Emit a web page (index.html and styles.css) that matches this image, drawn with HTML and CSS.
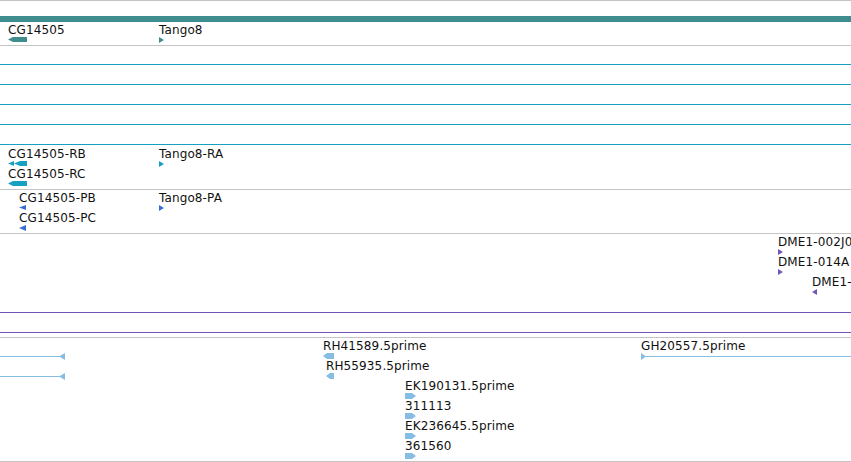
FILE: index.html
```html
<!DOCTYPE html>
<html lang="en">
<head>
    <meta charset="UTF-8">
    <title>Track view</title>
    <link rel="stylesheet" href="styles.css">
</head>
<body>
    <div class="view">
        <!-- gene track -->
        <div class="track track-gene">
            <div class="scale-bar"></div>
            <div class="feat" style="left:8px;top:21px">
                <span class="label">CG14505</span>
                <svg class="glyph" width="19" height="5"><polygon class="teal" points="0,2.5 5,0 19,0 19,5 5,5"/></svg>
            </div>
            <div class="feat" style="left:159px;top:21px">
                <span class="label">Tango8</span>
                <svg class="glyph" width="5" height="6"><polygon class="teal" points="0,0 5,3 0,6"/></svg>
            </div>
        </div>

        <!-- transcripts -->
        <div class="track track-rna">
            <div class="rule"></div>
            <div class="rule"></div>
            <div class="rule"></div>
            <div class="rule"></div>
            <div class="rule"></div>
            <div class="feat" style="left:8px;top:100px">
                <span class="label">CG14505-RB</span>
                <svg class="glyph" width="19" height="5"><polygon class="cyan" points="0,2.5 6,0 6,5"/><polygon class="cyan" points="6,2.5 12,0 19,0 19,5 12,5"/></svg>
            </div>
            <div class="feat" style="left:8px;top:120px">
                <span class="label">CG14505-RC</span>
                <svg class="glyph" width="19" height="5"><polygon class="cyan" points="0,2.5 5,0 19,0 19,5 5,5"/></svg>
            </div>
            <div class="feat" style="left:159px;top:100px">
                <span class="label">Tango8-RA</span>
                <svg class="glyph" width="5" height="6"><polygon class="cyan" points="0,0 5,3 0,6"/></svg>
            </div>
        </div>

        <!-- proteins -->
        <div class="track track-prot">
            <div class="feat" style="left:19px;top:0">
                <span class="label">CG14505-PB</span>
                <svg class="glyph" width="7" height="5"><polygon class="blue" points="0,2.5 7,0 7,5"/></svg>
            </div>
            <div class="feat" style="left:19px;top:20px">
                <span class="label">CG14505-PC</span>
                <svg class="glyph" width="7" height="6"><polygon class="blue" points="0,3 7,0 7,6"/></svg>
            </div>
            <div class="feat" style="left:159px;top:0">
                <span class="label">Tango8-PA</span>
                <svg class="glyph" width="5" height="6"><polygon class="blue" points="0,0 5,3 0,6"/></svg>
            </div>
        </div>

        <!-- insertions -->
        <div class="track track-ins">
            <div class="feat" style="left:778px;top:0">
                <span class="label">DME1-002J0</span>
                <svg class="glyph" width="5" height="6"><polygon class="purple" points="0,0 5,3 0,6"/></svg>
            </div>
            <div class="feat" style="left:778px;top:20px">
                <span class="label">DME1-014A</span>
                <svg class="glyph" width="5" height="6"><polygon class="purple" points="0,0 5,3 0,6"/></svg>
            </div>
            <div class="feat" style="left:812px;top:40px">
                <span class="label">DME1-</span>
                <svg class="glyph" width="5" height="6"><polygon class="purple" points="0,3 5,0 5,6"/></svg>
            </div>
            <div class="purple-rule first"></div>
            <div class="purple-rule"></div>
        </div>

        <!-- ESTs -->
        <div class="track track-est">
            <svg class="est-line" style="top:15px" width="66" height="7"><line class="sky-line" x1="0" y1="3.5" x2="62" y2="3.5"/><polygon class="sky" points="59,3.5 65,0 65,7"/></svg>
            <svg class="est-line" style="top:35px" width="66" height="7"><line class="sky-line" x1="0" y1="3.5" x2="62" y2="3.5"/><polygon class="sky" points="59,3.5 65,0 65,7"/></svg>
            <div class="feat" style="left:323px;top:0">
                <span class="label">RH41589.5prime</span>
                <svg class="glyph" width="11" height="6"><polygon class="sky" points="0,3 4,0 11,0 11,6 4,6"/></svg>
            </div>
            <div class="feat" style="left:326px;top:20px">
                <span class="label">RH55935.5prime</span>
                <svg class="glyph" width="8" height="6"><polygon class="sky" points="0,3 4,0 8,0 8,6 4,6"/></svg>
            </div>
            <div class="feat" style="left:405px;top:40px">
                <span class="label">EK190131.5prime</span>
                <svg class="glyph" width="11" height="6"><polygon class="sky" points="0,0 7,0 11,3 7,6 0,6"/></svg>
            </div>
            <div class="feat" style="left:405px;top:60px">
                <span class="label">311113</span>
                <svg class="glyph" width="11" height="6"><polygon class="sky" points="0,0 7,0 11,3 7,6 0,6"/></svg>
            </div>
            <div class="feat" style="left:405px;top:80px">
                <span class="label">EK236645.5prime</span>
                <svg class="glyph" width="11" height="6"><polygon class="sky" points="0,0 7,0 11,3 7,6 0,6"/></svg>
            </div>
            <div class="feat" style="left:405px;top:100px">
                <span class="label">361560</span>
                <svg class="glyph" width="11" height="6"><polygon class="sky" points="0,0 7,0 11,3 7,6 0,6"/></svg>
            </div>
            <div class="feat" style="left:641px;top:0">
                <span class="label">GH20557.5prime</span>
                <svg class="glyph" width="210" height="7"><line class="sky-line" x1="2" y1="3.5" x2="210" y2="3.5"/><polygon class="sky" points="0,0 5,3.5 0,7"/></svg>
            </div>
        </div>
    </div>
</body>
</html>
```

FILE: styles.css
```css
body {
    margin: 0;
    padding: 0;
    background: #fff;
    font-family: "DejaVu Sans", sans-serif;
    overflow: hidden;
}
.view {
    width: 851px;
    height: 462px;
    overflow: hidden;
}
.track {
    position: relative;
    box-sizing: border-box;
    border-top: 1px solid #c4c4c4;
    overflow: hidden;
}
.track-gene {
    height: 45px;
    padding-top: 15px;
}
.track-rna {
    height: 144px;
    padding-top: 18px;
    display: flex;
    flex-direction: column;
    gap: 19px;
}
.track-prot {
    height: 44px;
}
.track-ins {
    height: 104px;
    padding-top: 78px;
}
.track-est {
    height: 125px;
    border-bottom: 1px solid #c4c4c4;
}
.scale-bar {
    height: 6px;
    background: #408d8f;
}
.rule {
    height: 1px;
    background: #17a0c2;
}
.purple-rule {
    height: 1px;
    background: #7353b5;
}
.purple-rule.first {
    margin-bottom: 19px;
}
.feat {
    position: absolute;
    display: flex;
    flex-direction: column;
    align-items: flex-start;
}
.label {
    font-size: 12px;
    line-height: 14px;
    padding-top: 1px;
    letter-spacing: 0.12px;
    color: #111;
    white-space: nowrap;
}
.glyph {
    display: block;
}
.est-line {
    position: absolute;
    left: 0;
}
.teal { fill: #408d8f; }
.cyan { fill: #17a0c2; }
.blue { fill: #3a6fd0; }
.purple { fill: #7356b7; }
.sky { fill: #87bce3; }
.sky-line {
    stroke: #87bce3;
    stroke-width: 1;
}
```
